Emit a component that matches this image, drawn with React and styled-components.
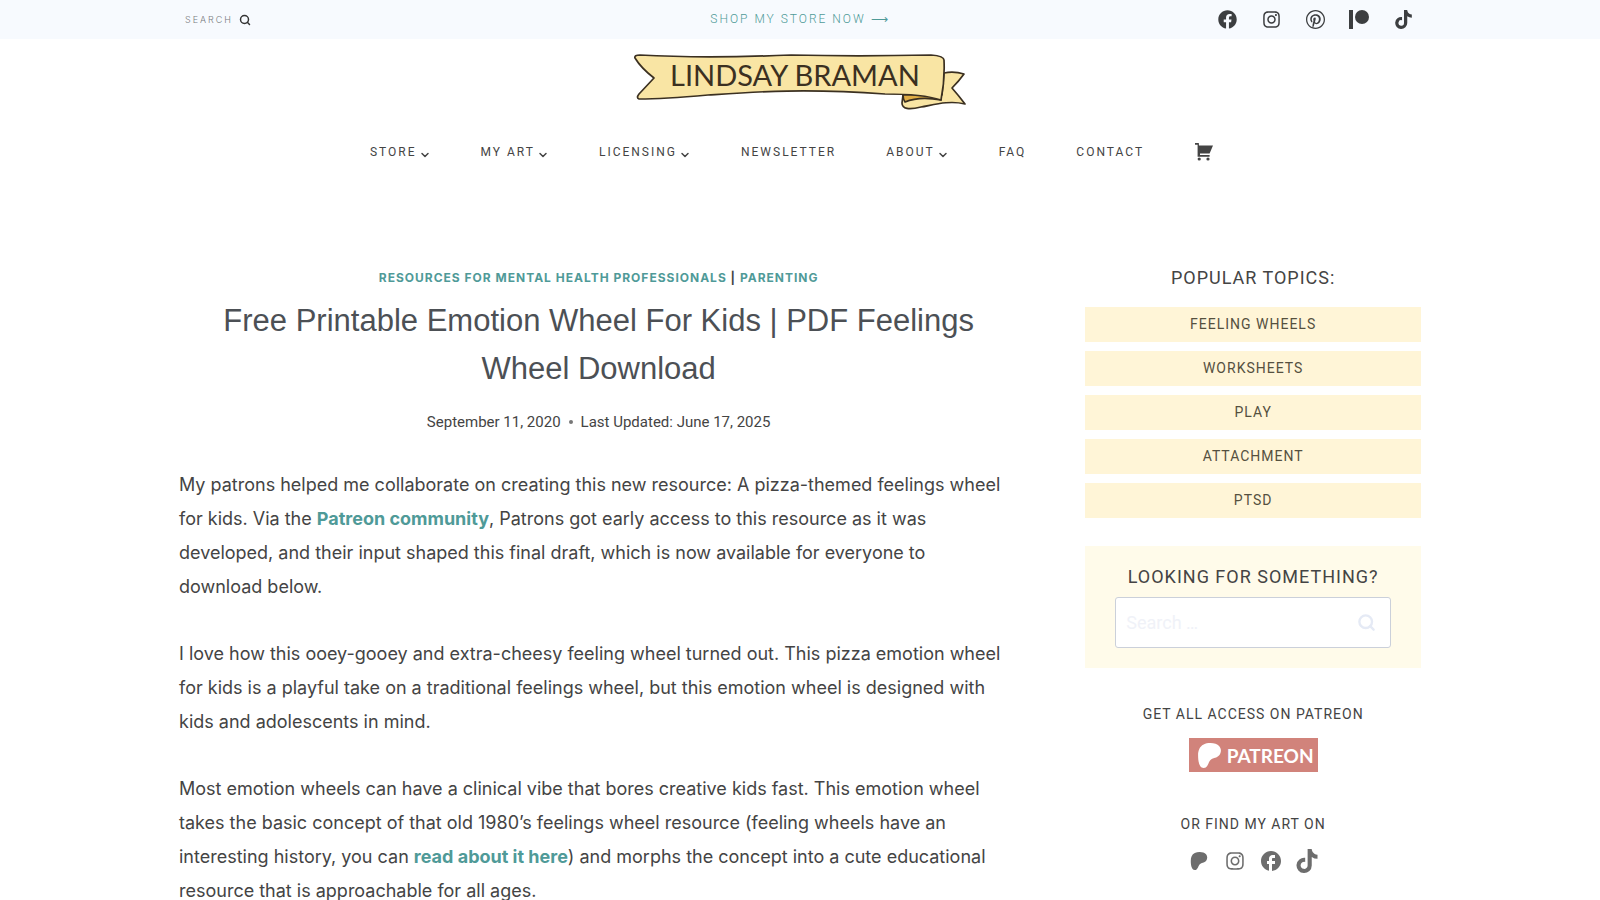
import React from "react";
import styled, { createGlobalStyle } from "styled-components";
import { FaFacebook, FaInstagram, FaTiktok } from "react-icons/fa";
import { FaPatreon } from "react-icons/fa6";
import { MdFacebook } from "react-icons/md";
import { ChevronDown, Search } from "lucide-react";

const navItems = [
  { label: "Store", menu: true },
  { label: "My Art", menu: true },
  { label: "Licensing", menu: true },
  { label: "Newsletter" },
  { label: "About", menu: true },
  { label: "FAQ" },
  { label: "Contact" },
];

const topics = ["Feeling Wheels", "Worksheets", "Play", "Attachment", "PTSD"];

const PatreonBars = () => (
  <svg viewBox="0 0 20 20" width="20" height="20" fill="currentColor">
    <rect x="0" y="0" width="4" height="19" />
    <circle cx="13" cy="7" r="7" />
  </svg>
);

const PinterestRing = () => (
  <svg viewBox="0 0 16 16" width="19" height="19" fill="currentColor">
    <path d="M8 0c-4.412 0-8 3.587-8 8s3.587 8 8 8 8-3.588 8-8-3.588-8-8-8zM8 14.931c-0.716 0-1.403-0.109-2.053-0.309 0.281-0.459 0.706-1.216 0.862-1.816 0.084-0.325 0.431-1.647 0.431-1.647 0.225 0.431 0.888 0.797 1.587 0.797 2.091 0 3.597-1.922 3.597-4.313 0-2.291-1.869-4.003-4.272-4.003-2.991 0-4.578 2.009-4.578 4.194 0 1.016 0.541 2.281 1.406 2.684 0.131 0.063 0.2 0.034 0.231-0.094 0.022-0.097 0.141-0.566 0.194-0.787 0.016-0.069 0.009-0.131-0.047-0.197-0.287-0.347-0.516-0.988-0.516-1.581 0-1.528 1.156-3.009 3.128-3.009 1.703 0 2.894 1.159 2.894 2.819 0 1.875-0.947 3.175-2.178 3.175-0.681 0-1.191-0.563-1.025-1.253 0.197-0.825 0.575-1.713 0.575-2.306 0-0.531-0.284-0.975-0.878-0.975-0.697 0-1.253 0.719-1.253 1.684 0 0.612 0.206 1.028 0.206 1.028s-0.688 2.903-0.813 3.444c-0.141 0.6-0.084 1.441-0.025 1.988-2.578-1.006-4.406-3.512-4.406-6.447 0-3.828 3.103-6.931 6.931-6.931s6.931 3.103 6.931 6.931c0 3.828-3.103 6.931-6.931 6.931z" />
  </svg>
);

const Cart = () => (
  <svg viewBox="0 0 20 20" width="20" height="20" fill="currentColor">
    <path d="M1 1 H4.8 L5 3.6 H19 L15.6 11.6 H6 V13 H15.6 V14.8 H3.6 V2.8 H1 Z" />
    <circle cx="5.2" cy="17" r="1.6" />
    <circle cx="14" cy="17" r="1.6" />
  </svg>
);

const Banner = () => (
  <svg viewBox="-1 0 336 58" width="336" height="58" role="img">
    <g stroke="#3b3021" strokeWidth="1.7" strokeLinejoin="round" strokeLinecap="round">
      <path
        d="M311 19 Q321 17 331 20 Q326 27 319 34 Q326 42 332 50 C316 46 300 51 288 53 C276 56 269 55 269 49 L270 41 L309 41 Z"
        fill="#f9e5a4"
      />
      <path d="M270 41 Q270 45 272 48 C284 43 297 44 308 46 L308 40 Z" fill="#e0ad45" />
      <path
        d="M2 4 Q1 1 7 1 C60 4 110 3 158 1 C200 2 250 2 298 1 Q311 2 311 6 Q312 26 308 46 Q290 40 252 40 C170 34 120 38 75 41 Q30 45 6 45 Q3 44 6 40 L21 24 Q8 14 2 4 Z"
        fill="#f9e5a4"
      />
    </g>
    <BannerText x="37" y="32">
      LINDSAY BRAMAN
    </BannerText>
  </svg>
);

const App = () => (
  <>
    <GlobalStyle />
    <TopBar>
      <TopInner>
        <SearchToggle type="button">
          Search <Search size={12} strokeWidth={3} />
        </SearchToggle>
        <StoreLink href="#store">Shop my store now ⟶</StoreLink>
        <HeaderSocials>
          <a href="#facebook" aria-label="Facebook">
            <FaFacebook />
          </a>
          <a href="#instagram" aria-label="Instagram">
            <FaInstagram />
          </a>
          <a href="#pinterest" aria-label="Pinterest">
            <PinterestRing />
          </a>
          <a href="#patreon" aria-label="Patreon">
            <PatreonBars />
          </a>
          <a href="#tiktok" aria-label="TikTok">
            <FaTiktok />
          </a>
        </HeaderSocials>
      </TopInner>
    </TopBar>

    <Header>
      <LogoLink href="#home" aria-label="Lindsay Braman">
        <Banner />
      </LogoLink>
      <Nav>
        {navItems.map((item) => (
          <NavLink key={item.label} href={`#${item.label}`}>
            {item.label}
            {item.menu && <ChevronDown size={12} strokeWidth={3} />}
          </NavLink>
        ))}
        <CartLink href="#cart" aria-label="Cart">
          <Cart />
        </CartLink>
      </Nav>
    </Header>

    <Content>
      <main>
        <Categories>
          <a href="#professionals">Resources for Mental Health Professionals</a> |{" "}
          <a href="#parenting">Parenting</a>
        </Categories>
        <Title>Free Printable Emotion Wheel For Kids | PDF Feelings Wheel Download</Title>
        <Meta>
          <span>September 11, 2020</span>
          <Dot />
          <span>Last Updated: June 17, 2025</span>
        </Meta>
        <Article>
          <p>
            My patrons helped me collaborate on creating this new resource: A pizza-themed feelings
            wheel for kids. Via the <a href="#community">Patreon community</a>, Patrons got early
            access to this resource as it was developed, and their input shaped this final draft,
            which is now available for everyone to download below.
          </p>
          <p>
            I love how this ooey-gooey and extra-cheesy feeling wheel turned out. This pizza emotion
            wheel for kids is a playful take on a traditional feelings wheel, but this emotion wheel
            is designed with kids and adolescents in mind.
          </p>
          <p>
            Most emotion wheels can have a clinical vibe that bores creative kids fast. This emotion
            wheel takes the basic concept of that old 1980’s feelings wheel resource (feeling wheels
            have an interesting history, you can <a href="#history">read about it here</a>) and
            morphs the concept into a cute educational resource that is approachable for all ages.
          </p>
        </Article>
      </main>

      <Sidebar>
        <SideTitle>Popular Topics:</SideTitle>
        <Topics>
          {topics.map((topic) => (
            <TopicLink key={topic} href={`#${topic}`}>
              {topic}
            </TopicLink>
          ))}
        </Topics>
        <SearchBox>
          <SideTitle as="label" htmlFor="site-search">
            Looking for something?
          </SideTitle>
          <SearchField>
            <input id="site-search" type="search" placeholder="Search …" />
            <button type="submit" aria-label="Search">
              <Search size={19} strokeWidth={3} />
            </button>
          </SearchField>
        </SearchBox>
        <SideLabel>Get all access on Patreon</SideLabel>
        <PatreonBadge href="#patreon">
          <FaPatreon size={25} />
          PATREON
        </PatreonBadge>
        <SideLabel>Or find my art on</SideLabel>
        <SideSocials>
          <a href="#patreon" aria-label="Patreon">
            <FaPatreon size={18} />
          </a>
          <a href="#instagram" aria-label="Instagram">
            <FaInstagram size={20} />
          </a>
          <a href="#facebook" aria-label="Facebook">
            <MdFacebook size={24} />
          </a>
          <a href="#tiktok" aria-label="TikTok">
            <FaTiktok size={24} />
          </a>
        </SideSocials>
      </Sidebar>
    </Content>
  </>
);

const GlobalStyle = createGlobalStyle`
  * {
    box-sizing: border-box;
  }

  body {
    margin: 0;
    height: 100vh;
    overflow: hidden;
    background: #fff;
    color: #444;
    font-family: Roboto, "Liberation Sans", sans-serif;
  }

  a {
    color: inherit;
    text-decoration: none;
  }

  svg {
    display: block;
  }
`;

const TopBar = styled.div`
  background: #f7fafe;
`;

const TopInner = styled.div`
  display: grid;
  grid-template-columns: 1fr auto 1fr;
  align-items: center;
  max-width: 1290px;
  height: 39px;
  margin: 0 auto;
  padding: 0 24px;
`;

const SearchToggle = styled.button`
  display: flex;
  align-items: center;
  justify-self: start;
  gap: 6px;
  padding: 0 6px;
  border: 0;
  background: none;
  color: #777b80;
  font: 300 9px Inter, sans-serif;
  letter-spacing: 2px;
  text-transform: uppercase;

  svg {
    color: #333;
  }
`;

const StoreLink = styled.a`
  padding-bottom: 2px;
  color: #4f9a98;
  font-size: 12px;
  font-weight: 300;
  letter-spacing: 2px;
  text-transform: uppercase;
`;

const HeaderSocials = styled.div`
  display: flex;
  justify-self: end;
  gap: 24px;
  padding-right: 8px;
  color: #3c3e40;
  font-size: 19px;

  a {
    display: grid;
    place-items: center;
    width: 20px;
    height: 20px;
  }
`;

const Header = styled.header`
  display: flex;
  flex-direction: column;
  align-items: center;
`;

const LogoLink = styled.a`
  padding-top: 15px;
`;

const BannerText = styled.text`
  fill: #3b3021;
  font-family: Lato, sans-serif;
  font-size: 29px;
`;

const Nav = styled.nav`
  display: flex;
  align-items: center;
  gap: 50px;
  height: 80px;
`;

const NavLink = styled.a`
  display: flex;
  align-items: center;
  gap: 2px;
  font-size: 12px;
  letter-spacing: 2px;
  text-transform: uppercase;

  svg {
    margin-top: 5px;
  }
`;

const CartLink = styled.a`
  padding-right: 16px;
`;

const Content = styled.div`
  display: grid;
  grid-template-columns: 5fr 2fr;
  gap: 67px;
  max-width: 1290px;
  margin: 0 auto;
  padding: 73px 24px 0;
`;

const Categories = styled.div`
  font: 700 12px/25px Inter, sans-serif;
  letter-spacing: 1px;
  text-align: center;
  text-transform: uppercase;

  a {
    color: #4f9a98;
  }
`;

const Title = styled.h1`
  margin: 7px 0 0;
  color: #4c5055;
  font: 400 31px/48px "Liberation Sans", sans-serif;
  text-align: center;
`;

const Meta = styled.div`
  display: flex;
  align-items: center;
  justify-content: center;
  gap: 8px;
  margin-top: 17px;
  font-size: 15px;
  line-height: 24px;
`;

const Dot = styled.span`
  width: 4px;
  height: 4px;
  border-radius: 50%;
  background: #777;
`;

const Article = styled.article`
  margin-top: 34px;
  padding-right: 8px;
  font-family: Inter, sans-serif;
  font-size: 18px;
  line-height: 34px;

  p {
    margin: 0 0 33px;
  }

  a {
    color: #4f9a98;
    font-weight: 700;
  }
`;

const Sidebar = styled.aside`
  display: flex;
  flex-direction: column;
  align-items: center;
`;

const SideTitle = styled.h2`
  margin: 0;
  font-size: 18px;
  font-weight: 400;
  line-height: 25px;
  letter-spacing: 1px;
  text-transform: uppercase;
`;

const Topics = styled.div`
  display: grid;
  gap: 9px;
  width: 100%;
  margin-top: 17px;
`;

const TopicLink = styled.a`
  background: #fff5d7;
  color: #55503f;
  font-size: 14px;
  line-height: 35px;
  letter-spacing: 1px;
  text-align: center;
  text-transform: uppercase;
`;

const SearchBox = styled.form`
  display: flex;
  flex-direction: column;
  align-items: center;
  width: 100%;
  margin-top: 28px;
  padding: 18px 30px 20px;
  background: #fffbea;
`;

const SearchField = styled.div`
  display: flex;
  align-items: center;
  width: 100%;
  height: 51px;
  margin-top: 8px;
  padding: 0 14px 0 10px;
  border: 1px solid #cbd0da;
  border-radius: 3px;
  background: #fff;

  input {
    flex: 1;
    min-width: 0;
    padding: 0;
    border: 0;
    outline: 0;
    background: none;
    font: inherit;
    font-size: 18px;
  }

  input::placeholder {
    color: #f0f2f8;
  }

  button {
    padding: 0;
    border: 0;
    background: none;
    color: #e5eaf5;
  }
`;

const SideLabel = styled.div`
  margin-top: 34px;
  font-size: 14px;
  line-height: 24px;
  letter-spacing: 1px;
  text-transform: uppercase;
`;

const PatreonBadge = styled.a`
  display: flex;
  align-items: center;
  gap: 5px;
  height: 34px;
  margin: 12px 0 6px;
  padding: 0 4px 0 8px;
  background: #d1837b;
  color: #fff;
  font: 700 19px Lato, sans-serif;
`;

const SideSocials = styled.div`
  display: flex;
  gap: 12px;
  margin-top: 13px;
  color: #6d6d6d;

  a {
    display: grid;
    place-items: center;
    width: 24px;
    height: 24px;
  }
`;

export default App;
